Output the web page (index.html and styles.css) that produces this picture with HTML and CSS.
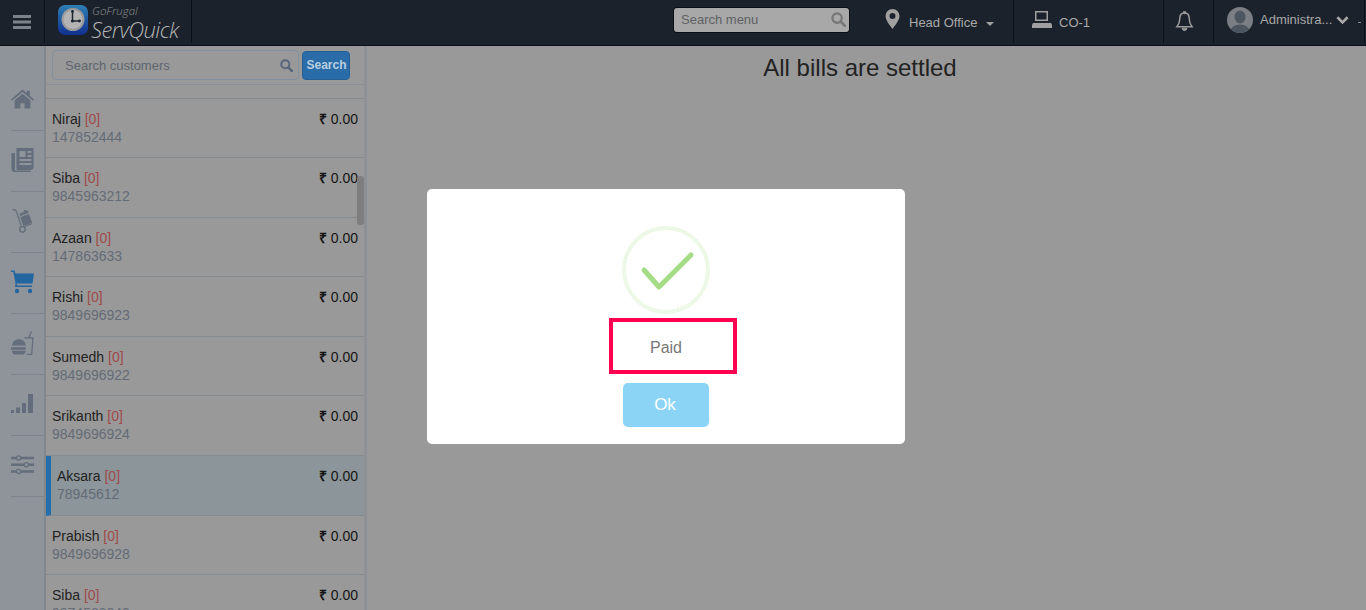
FILE: index.html
```html
<!DOCTYPE html>
<html lang="en">
<head>
<meta charset="utf-8">
<title>GoFrugal ServQuick</title>
<link rel="stylesheet" href="styles.css">
</head>
<body>
<header class="topbar">
  <div class="menu-cell">
    <svg class="ic-burger" viewBox="0 0 18 14"><path d="M0 0h18v3H0zM0 5.5h18v3H0zM0 11h18v3H0z"/></svg>
  </div>
  <div class="brand">
    <svg class="logo" viewBox="0 0 30 30">
      <defs><linearGradient id="lg" x1="0" y1="0" x2="0" y2="1"><stop offset="0" stop-color="#2f7fb4"/><stop offset="1" stop-color="#0f2f8f"/></linearGradient></defs>
      <rect width="30" height="30" rx="7" fill="url(#lg)"/>
      <circle cx="15" cy="14.5" r="11.5" fill="#9a9a9a"/>
      <circle cx="15" cy="14.5" r="9.5" fill="#b4b4b4"/>
      <path d="M14.5 6v10h7" fill="none" stroke="#1c2430" stroke-width="1.5"/>
      <circle cx="14.5" cy="6.5" r="1.4" fill="#1c2430"/><circle cx="14.5" cy="16" r="1.6" fill="#1c2430"/><circle cx="21.5" cy="16" r="1.4" fill="#1c2430"/>
    </svg>
    <div class="brand-text"><span class="brand-small">GoFrugal</span><span class="brand-big">ServQuick</span></div>
  </div>
  <div class="top-right">
    <div class="menu-search"><span>Search menu</span>
      <svg class="ic-search-menu" viewBox="0 0 16 16"><circle cx="6.5" cy="6.5" r="5" fill="none" stroke-width="2.4"/><path d="M10.500 10.500l4.300 4.300" stroke-width="3" stroke-linecap="round"/></svg>
    </div>
    <div class="top-item office">
      <svg class="ic-pin" viewBox="0 0 14 20"><path fill-rule="evenodd" d="M7 0a7 7 0 0 1 7 7c0 4-4.500 9.500-7 13C4.500 16.500 0 11 0 7a7 7 0 0 1 7-7zm0 4a3 3 0 1 0 0 6 3 3 0 0 0 0-6z"/></svg>
      <span>Head Office</span><i class="caret"></i>
    </div>
    <div class="top-item counter">
      <svg class="ic-pc" viewBox="0 0 20 18"><path fill-rule="evenodd" d="M3 0h13v10H3zm1.500 1.500v7h10v-7zM1 12h18l1 2v3H0v-3z"/></svg>
      <span>CO-1</span>
    </div>
    <div class="top-item bell">
      <svg class="ic-bell" viewBox="0 0 20 22"><path d="M10 2c-3.500 0-5 2.600-5 6 0 4-1 6-3 8.500h16c-2-2.500-3-4.500-3-8.500 0-3.400-1.500-6-5-6z" fill="none" stroke-width="1.600"/><circle cx="10" cy="1.500" r="1.300"/><path d="M7.500 18h5a2.500 2.500 0 0 1-5 0z"/></svg>
    </div>
    <div class="top-item user">
      <svg class="avatar" viewBox="0 0 26 26"><defs><clipPath id="ac"><circle cx="13" cy="13" r="13"/></clipPath></defs><circle cx="13" cy="13" r="13" fill="#7b7e84"/><g clip-path="url(#ac)" fill="#4d5560"><ellipse cx="13" cy="10" rx="5.500" ry="6.500"/><ellipse cx="13" cy="25" rx="10" ry="7.500"/></g></svg>
      <span>Administra...</span>
      <svg class="ic-chev" viewBox="0 0 14 10"><path d="M1.500 2l5.500 5.500L12.500 2" fill="none" stroke-width="2.800"/></svg>
      <i class="user-tick"></i>
    </div>
  </div>
</header>

<div class="layout">
  <nav class="rail">
    <div class="rail-item"><svg viewBox="0 0 22 18"><path d="M11 0l4 3.400V1h3v5l4 3.500-1 1.200L11 2.400 1 10.700 0 9.500zM11 4l7.500 6.300V18H13v-5H9v5H3.500v-7.700z"/></svg></div>
    <div class="rail-item"><svg viewBox="0 0 22 24"><path fill-rule="evenodd" d="M5 0h17v19a3 3 0 0 1-3 3H6a1 1 0 0 1-1-1zm3 3v6h6V3zm8 0v2h4V3zm0 4v2h4V7zM8 11v2h12v-2zm0 4v2h12v-2z"/><path d="M0 5h3.500v17.500H19V24H3a3 3 0 0 1-3-3z"/></svg></div>
    <div class="rail-item"><svg viewBox="0 0 22 26"><path d="M0 1.500C2 0 4 1 4.500 3l5 15" fill="none" stroke="#646d7b" stroke-width="1.300"/><circle cx="11" cy="22" r="3" fill="none" stroke="#646d7b" stroke-width="1.500"/><path d="M8 5l4-1.500 1-2.500 4 1 .5 2L8 8zM8.500 9l9.500-3.500 3.500 9.500-9.500 3.500z"/><path d="M13 19l8-3" stroke="#646d7b" stroke-width="1.300"/></svg></div>
    <div class="rail-item active"><svg viewBox="0 0 23 23"><path d="M0 0h3.500l1 3H23l-1.500 10H5.500L6 15h15v1.500H4L4.500 13 2.300 1.500H0z"/><circle cx="6" cy="20.500" r="2.200"/><circle cx="19" cy="20.500" r="2.200"/></svg></div>
    <div class="rail-item"><svg viewBox="0 0 22 23"><path d="M1 14c0-3.500 3-6 6.500-6s6.500 2.500 6.500 6zM0 15.500h14V18H0zM1 19h13c0 2-1 3.500-3 3.500H4c-2 0-3-1.500-3-3.500z"/><path d="M13 6.500h8L19.800 22.500H15M17 6.500L19.500.5" fill="none" stroke="#646d7b" stroke-width="1.200"/></svg></div>
    <div class="rail-item"><svg viewBox="0 0 23 20"><path d="M0 16h3v3H0zM5 13.500h4V19H5zM11 9h4v10h-4zM17 0h5v19h-5z"/></svg></div>
    <div class="rail-item"><svg viewBox="0 0 24 20"><path d="M0 1.500h24v2.500H0zM0 8.500h24V11H0zM0 15.500h24V18H0z"/><g stroke="#646d7b" stroke-width="1.300" fill="#8f939a"><circle cx="8" cy="2.700" r="2.200"/><circle cx="16" cy="9.700" r="2.200"/><circle cx="8" cy="16.700" r="2.200"/></g></svg></div>
  </nav>

  <section class="customers">
    <div class="cust-search">
      <div class="cust-input"><span>Search customers</span>
        <svg class="ic-search" viewBox="0 0 16 16"><circle cx="6.500" cy="6.500" r="5" fill="none" stroke-width="2.400"/><path d="M10.500 10.500l4.300 4.300" stroke-width="3" stroke-linecap="round"/></svg>
      </div>
      <div class="cust-btn">Search</div>
    </div>
    <div class="cust-spacer"></div>
    <div class="cust-row"><div><div class="cname">Niraj <em>[0]</em></div><div class="cphone">147852444</div></div><div class="camt"><b>₹</b> 0.00</div></div>
    <div class="cust-row"><div><div class="cname">Siba <em>[0]</em></div><div class="cphone">9845963212</div></div><div class="camt"><b>₹</b> 0.00</div></div>
    <div class="cust-row"><div><div class="cname">Azaan <em>[0]</em></div><div class="cphone">147863633</div></div><div class="camt"><b>₹</b> 0.00</div></div>
    <div class="cust-row"><div><div class="cname">Rishi <em>[0]</em></div><div class="cphone">9849696923</div></div><div class="camt"><b>₹</b> 0.00</div></div>
    <div class="cust-row"><div><div class="cname">Sumedh <em>[0]</em></div><div class="cphone">9849696922</div></div><div class="camt"><b>₹</b> 0.00</div></div>
    <div class="cust-row"><div><div class="cname">Srikanth <em>[0]</em></div><div class="cphone">9849696924</div></div><div class="camt"><b>₹</b> 0.00</div></div>
    <div class="cust-row selected"><div><div class="cname">Aksara <em>[0]</em></div><div class="cphone">78945612</div></div><div class="camt"><b>₹</b> 0.00</div></div>
    <div class="cust-row"><div><div class="cname">Prabish <em>[0]</em></div><div class="cphone">9849696928</div></div><div class="camt"><b>₹</b> 0.00</div></div>
    <div class="cust-row"><div><div class="cname">Siba <em>[0]</em></div><div class="cphone">9874569340</div></div><div class="camt"><b>₹</b> 0.00</div></div>
    <div class="scroll-thumb"></div>
  </section>

  <main class="content">
    <h1>All bills are settled</h1>
  </main>
</div>

<div class="backdrop">
  <div class="dialog">
    <svg class="check" viewBox="0 0 88 88">
      <circle cx="44" cy="44" r="42" fill="none" stroke="#edf8e7" stroke-width="4"/>
      <path d="M1.500 31l2 1M3 28.500l1 1M55 82l2-2M59 80.500l1.500-2" fill="none" stroke="#cfe5c2" stroke-width=".5"/>
      <path d="M22 44l15 17 32-32" fill="none" stroke="#a5dc86" stroke-width="5" stroke-linecap="round" stroke-linejoin="round"/>
    </svg>
    <div class="paid">Paid</div>
    <div class="ok">Ok</div>
  </div>
</div>
</body>
</html>
```
FILE: styles.css
```css
* { box-sizing: border-box; }
html, body { height: 100%; }
body {
  margin: 0;
  height: 610px;
  overflow: hidden;
  background: #999;
  font-family: "Liberation Sans", Arial, sans-serif;
  font-size: 14px;
  color: #222;
}

/* top bar */
.topbar {
  display: flex;
  height: 46px;
  background: #1b222c;
  border-bottom: 1px solid #0c1016;
  color: #a9a9a9;
}
.menu-cell {
  width: 45px;
  height: 43px;
  border-right: 1px solid #0c1016;
  display: flex;
  align-items: center;
  justify-content: center;
}
.ic-burger { width: 18px; height: 14px; fill: #7d838b; }
.brand {
  width: 147px;
  height: 43px;
  border-right: 1px solid #0c1016;
  display: flex;
  align-items: flex-start;
  padding: 5px 0 0 13px;
}
.logo { width: 30px; height: 30px; flex: none; }
.brand-text {
  display: flex;
  flex-direction: column;
  margin-left: 3px;
  font-family: "Open Sans", sans-serif;
  font-style: italic;
  font-weight: 300;
  white-space: nowrap;
}
.brand-small { font-size: 11.5px; line-height: 12px; margin-left: 1px; color: #8f8f8f; }
.brand-big { font-size: 22px; line-height: 24px; letter-spacing: -0.6px; color: #b4b4b4; }
.top-right { display: flex; margin-left: auto; align-items: flex-start; }
.menu-search {
  flex: none;
  width: 175px;
  height: 24px;
  margin: 8px 24px 0 0;
  background: #a8a8a8;
  border-radius: 3px;
  box-shadow: 0 0 0 1px #0c1016;
  display: flex;
  align-items: center;
  justify-content: space-between;
  padding: 0 3px 0 7px;
  font-size: 13px;
  color: #5f6163;
}
.menu-search span { margin-top: -2px; }
.ic-search-menu { width: 15px; height: 15px; margin-top: -2px; fill: none; stroke: #777; }
.top-item {
  flex: none;
  height: 43px;
  border-right: 1px solid #0c1016;
  display: flex;
  align-items: center;
  font-size: 13px;
  color: #a9a9a9;
}
.office { width: 141px; padding: 0 0 0 12px; }
.ic-pin { width: 15px; height: 20px; fill: #a0a0a0; margin: -6px 9px 0 0; flex: none; }
.office span { margin-top: 1px; }
.caret {
  width: 0; height: 0;
  margin: 4px 0 0 9px;
  border: 4px solid transparent;
  border-top-color: #a0a0a0;
  border-bottom: 0;
}
.counter { width: 150px; padding-left: 18px; }
.counter span { margin-top: 1px; }
.ic-pc { width: 20px; height: 18px; fill: #a0a0a0; margin: -3px 7px 0 0; flex: none; }
.bell { width: 50px; padding-left: 11px; }
.ic-bell { width: 19px; height: 21px; fill: #9a9a9a; stroke: #9a9a9a; }
.user { width: 151px; padding-left: 13px; margin-right: 1px; }
.user span { margin: -4px 0 0 7px; white-space: nowrap; }
.avatar { width: 26px; height: 26px; flex: none; margin-top: -4px; }
.ic-chev { width: 13px; height: 10px; margin: -4px 0 0 4px; fill: none; stroke: #a9a9a9; flex: none; }
.user-tick { width: 3px; height: 1px; margin: 2px 0 0 9px; background: #8a8a8a; flex: none; }

/* layout */
.layout { display: flex; height: 564px; }
.rail {
  width: 46px;
  flex: none;
  background: #8f939a;
  border-right: 2px solid #82878e;
  padding: 24px 0 0 11px;
  display: flex;
  flex-direction: column;
}
.rail-item {
  height: 61px;
  flex: none;
  border-bottom: 1px solid #7f848c;
  display: flex;
  align-items: center;
}
.rail-item svg { width: 23px; height: 24px; fill: #646d7b; margin-top: -3px; }
.rail-item.active svg { fill: #23659f; }

/* customers */
.customers {
  width: 321px;
  flex: none;
  position: relative;
  overflow: hidden;
  background: #999;
  border-right: 3px solid #8d9094;
}
.cust-search {
  height: 39px;
  padding: 4px 0 0 6px;
  display: flex;
  align-items: flex-start;
  border-bottom: 1px solid #8b9096;
}
.cust-input {
  flex: none;
  width: 247px;
  height: 30px;
  background: #999;
  border: 1px solid #82909f;
  border-radius: 4px;
  display: flex;
  align-items: center;
  justify-content: space-between;
  padding: 0 5px 0 12px;
  font-size: 13px;
  color: #5f656d;
}
.ic-search { width: 13px; height: 13px; fill: none; stroke: #56657a; }
.cust-btn {
  flex: none;
  width: 48px;
  height: 29px;
  margin: 1px 0 0 3px;
  padding: 0 0 2px 1px;
  background: #2a6ca8;
  border: 1px solid #235f95;
  border-radius: 4px;
  color: #b9cee0;
  font-size: 12px;
  font-weight: 700;
  display: flex;
  align-items: center;
  justify-content: center;
}
.cust-spacer { height: 13.7px; border-bottom: 1px solid #868b8f; }
.cust-row {
  height: 59.55px;
  display: flex;
  justify-content: space-between;
  align-items: flex-start;
  padding: 12px 6px 0 6px;
  border-bottom: 1px solid #868b8f;
}
.cust-row.selected {
  background: #8c9599;
  border-left: 5px solid #246eab;
  padding-left: 6px;
}
.cname { line-height: 16px; color: #222; }
.cname em { font-style: normal; color: #a04a4a; }
.cphone { line-height: 16px; margin-top: 2px; color: #646b77; }
.camt { line-height: 16px; color: #151515; white-space: nowrap; }
.camt b { font-weight: 700; }
.scroll-thumb {
  position: absolute;
  top: 130px;
  right: 0;
  width: 7px;
  height: 49px;
  border-radius: 3px;
  background: #7e7e7e;
}

/* main */
.content { flex: 1; padding: 0 13px 0 0; }
.content h1 {
  margin: 7px 0 0;
  font-size: 24px;
  line-height: 30px;
  font-weight: 400;
  color: #222;
  text-align: center;
}

/* dialog */
.backdrop {
  position: fixed;
  inset: 0;
  display: flex;
  justify-content: center;
  align-items: flex-start;
  padding: 189px 34px 0 0;
}
.dialog {
  width: 478px;
  height: 255px;
  background: #fff;
  border-radius: 5px;
  padding-top: 37px;
  display: flex;
  flex-direction: column;
  align-items: center;
}
.check { width: 88px; height: 88px; flex: none; }
.paid {
  flex: none;
  width: 128px;
  height: 56px;
  margin: 4px 0 0 14px;
  padding: 4px 14px 0 0;
  border: 4px solid #ff0050;
  display: flex;
  align-items: center;
  justify-content: center;
  font-size: 16px;
  color: #797979;
}
.ok {
  flex: none;
  width: 86px;
  height: 44px;
  margin-top: 9px;
  padding-right: 2px;
  background: #8cd4f5;
  border-radius: 5px;
  color: #fff;
  font-size: 17px;
  display: flex;
  align-items: center;
  justify-content: center;
}
```
